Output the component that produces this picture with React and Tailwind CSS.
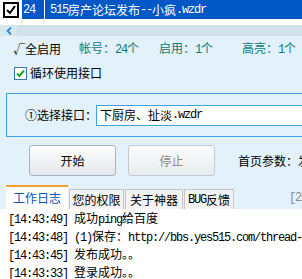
import React from 'react';

// SimSun-like mix: ASCII runs in a narrow mono, CJK in Noto
function T({ children }) {
  const parts = String(children).split(/([\x20-\x7e]+)/);
  return parts.map((p, i) =>
    /^[\x20-\x7e]+$/.test(p) ? (
      <span key={i} className="font-['Liberation_Mono',monospace] text-[12px] tracking-[-1.2px]">
        {p}
      </span>
    ) : (
      <span key={i}>{p}</span>
    )
  );
}

const logs = [
  '[14:43:49] 成功ping给百度',
  '[14:43:48] (1)保存：http://bbs.yes515.com/thread-1234-1-1.html',
  '[14:43:45] 发布成功。。',
  '[14:43:33] 登录成功。。',
  '[14:43:30] 保存配置',
];

const tabs = [
  { label: '您的权限', w: 'w-[55px]' },
  { label: '关于神器', w: 'w-[58px]' },
  { label: 'BUG反馈', w: 'w-[50px]' },
];

export default function App() {
  return (
    <div className="w-[302px] h-[279px] overflow-hidden flex flex-col bg-[#e3f1fa] text-[12px] leading-none text-black font-['Noto_Sans_CJK_SC',sans-serif]">
      {/* selected list row */}
      <div className="h-[19px] flex shrink-0">
        <div className="w-[22px] shrink-0 bg-white flex items-center justify-center">
          <svg width="16" height="16" viewBox="0 0 16 16">
            <rect x="1" y="1" width="14" height="14" fill="#fff" stroke="#000" strokeWidth="2" />
            <path d="M4 8 L7 11 L12 4" fill="none" stroke="#000" strokeWidth="2" />
          </svg>
        </div>
        <div className="w-[22px] shrink-0 bg-[#0058c6] text-white flex items-center pl-[1px]">
          <T>24</T>
        </div>
        <div className="w-[1px] shrink-0 bg-white" />
        <div className="flex-1 bg-[#0058c6] text-white flex items-center pl-[5px] whitespace-nowrap overflow-hidden">
          <T>515房产论坛发布--小疯.wzdr</T>
        </div>
      </div>
      <div className="h-[6px] flex bg-white shrink-0">
        <div className="w-[22px] border-r border-[#e2e2e2]" />
        <div className="w-[22px] border-r border-[#e2e2e2]" />
      </div>

      {/* collapse band */}
      <div className="h-[11px] flex bg-[#cfe2ea] shrink-0">
        <div className="w-[17px] bg-[#d6e7ef] flex items-center justify-center">
          <svg width="6" height="8" viewBox="0 0 6 8">
            <path d="M5 0.5 L1.5 4 L5 7.5" fill="none" stroke="#2f86d6" strokeWidth="1.8" />
          </svg>
        </div>
      </div>

      {/* stats */}
      <div className="mt-[6px] h-[14px] flex items-center pl-[13px] whitespace-nowrap shrink-0">
        <span className="w-[66px] shrink-0">
          <T>√</T>全启用
        </span>
        <span className="w-[80px] shrink-0 text-[#087a7a]">
          帐号：<T>24</T>个
        </span>
        <span className="w-[83px] shrink-0 text-[#087a7a]">
          启用：<T>1</T>个
        </span>
        <span className="shrink-0 text-[#087a7a]">
          高亮：<T>1</T>个
        </span>
      </div>

      {/* loop checkbox */}
      <div className="mt-[10px] h-[14px] flex items-center pl-[14px] gap-[3px] shrink-0">
        <svg width="13" height="13" viewBox="0 0 13 13">
          <rect x="0.5" y="0.5" width="12" height="12" fill="#fff" stroke="#3a76b0" />
          <path d="M3 6.5 L5.5 9 L10 3.5" fill="none" stroke="#1fa52a" strokeWidth="2" />
        </svg>
        <span>循环使用接口</span>
      </div>

      {/* interface group */}
      <div className="mt-[13px] ml-[6px] h-[44px] shrink-0 border border-r-0 border-[#3da2e0] flex items-center pl-[18px] whitespace-nowrap">
        <span className="w-[71px] shrink-0">①选择接口：</span>
        <div className="flex-1 h-[21px] bg-white border border-r-0 border-[#3da2e0] flex items-center pl-[3px]">
          <T>下厨房、扯淡.wzdr</T>
        </div>
      </div>

      {/* buttons */}
      <div className="mt-[8px] h-[31px] flex items-center pl-[29px] gap-[12px] whitespace-nowrap shrink-0">
        <button className="w-[87px] h-[31px] shrink-0 rounded-[3px] border border-[#a9b3bd] bg-linear-to-b from-[#fdfdfd] to-[#e4e8ec] text-black">
          开始
        </button>
        <button className="w-[87px] h-[31px] shrink-0 rounded-[3px] border border-[#c2c9d0] bg-linear-to-b from-[#fafbfc] to-[#e9ecef] text-[#8a8a8a]">
          停止
        </button>
        <span className="ml-[11px] shrink-0">首页参数：发布</span>
      </div>

      {/* tabs */}
      <div className="mt-[9px] h-[24px] flex items-end pl-[6px] gap-[1px] whitespace-nowrap shrink-0">
        <div className="w-[62px] h-[24px] shrink-0 bg-white border-t-2 border-[#f0a02c] flex items-center justify-center text-[#0a55c0]">
          工作日志
        </div>
        {tabs.map((t) => (
          <div
            key={t.label}
            className={`${t.w} h-[20px] shrink-0 bg-[#f3f3f3] border border-b-0 border-[#c6c6c6] flex items-center justify-center`}
          >
            <T>{t.label}</T>
          </div>
        ))}
        <span className="ml-[54px] shrink-0 self-center text-[#8a8a8a]">
          <T>[2.1]</T>
        </span>
      </div>

      {/* log */}
      <div className="flex-1 bg-white pl-[8px] leading-[18px] whitespace-nowrap overflow-hidden">
        {logs.map((l) => (
          <div key={l} className="h-[18px]">
            <T>{l}</T>
          </div>
        ))}
      </div>
    </div>
  );
}
